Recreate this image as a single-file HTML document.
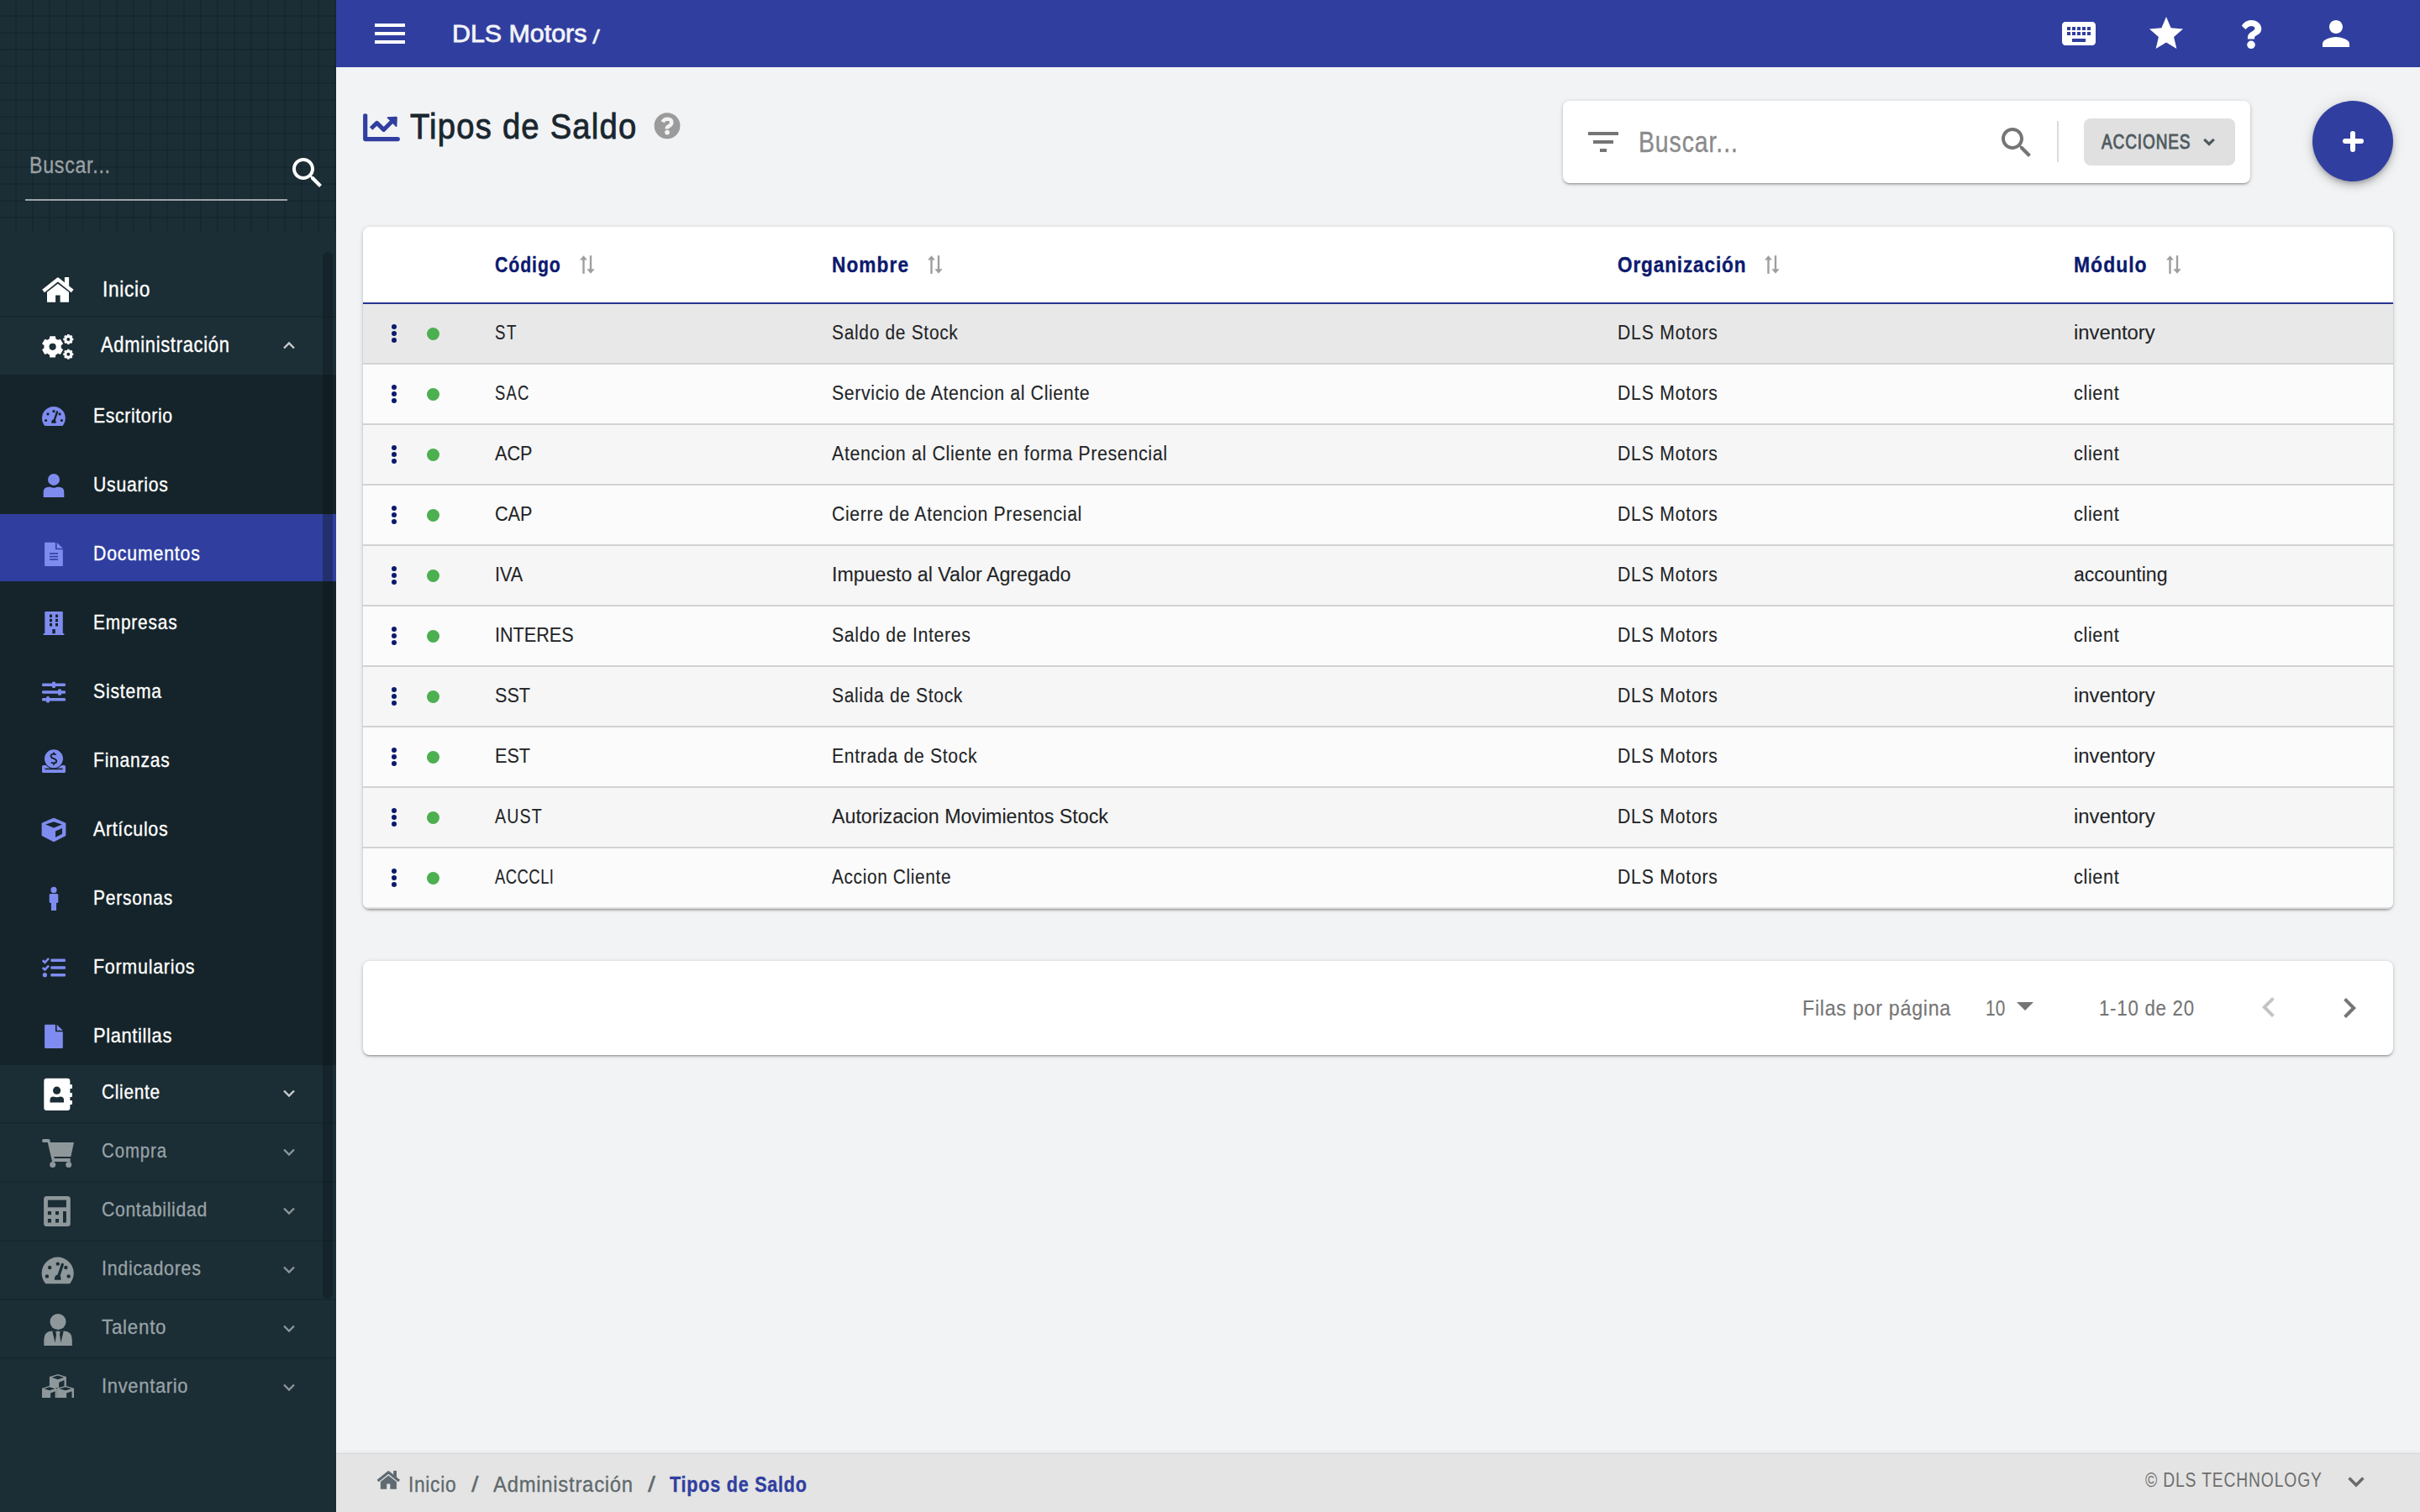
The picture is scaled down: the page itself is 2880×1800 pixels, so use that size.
<!DOCTYPE html>
<html><head><meta charset="utf-8"><title>Tipos de Saldo</title>
<style>
html,body{margin:0;padding:0;width:2880px;height:1800px;overflow:hidden;background:#f2f3f5;}
body{position:relative;font-family:"Liberation Sans", sans-serif;}
.t{position:absolute;line-height:1;white-space:nowrap;-webkit-text-stroke-width:0.35px;}
.r{position:absolute;display:block;}
#root{position:absolute;left:0;top:0;width:2880px;height:1800px;overflow:hidden;transform-origin:0 0;}
</style></head><body>
<div id="root">
<div class="r" style="left:0px;top:0px;width:400px;height:1800px;background:#1b2d35;"></div>
<div class="r" style="left:0px;top:0px;width:400px;height:276px;background:#1b2d35;background-image:repeating-linear-gradient(90deg, transparent 0px, transparent 18px, rgba(8,20,26,0.19) 18px, rgba(8,20,26,0.19) 20px),repeating-linear-gradient(180deg, transparent 0px, transparent 18px, rgba(8,20,26,0.19) 18px, rgba(8,20,26,0.19) 20px);"></div>
<div class="t" style="left:35.00px;top:184.14px;font-size:27px;color:#9aa1a4;transform:scaleX(0.8594);transform-origin:0 0;letter-spacing:0.838px;">Buscar...</div>
<div class="r" style="left:30px;top:237px;width:312px;height:2px;background:#9ea5a8;"></div>
<svg class="r" style="left:342px;top:182px;" width="48" height="48" viewBox="0 0 24 24"><path fill="#fff" d="M15.5 14h-.79l-.28-.27C15.41 12.59 16 11.11 16 9.5 16 5.91 13.09 3 9.5 3S3 5.91 3 9.5 5.91 16 9.5 16c1.61 0 3.09-.59 4.23-1.57l.27.28v.79l5 4.99L20.49 19l-4.99-5zm-6 0C7.01 14 5 11.99 5 9.5S7.01 5 9.5 5 14 7.01 14 9.5 11.99 14 9.5 14z"/></svg>
<div class="r" style="left:0px;top:376px;width:400px;height:2px;background:#172830;"></div>
<div class="r" style="left:0px;top:378px;width:400px;height:68px;background:#1c2e36;"></div>
<div class="r" style="left:0px;top:446px;width:400px;height:822px;background:#15242a;"></div>
<div class="r" style="left:0px;top:612px;width:400px;height:80px;background:#303f9f;"></div>
<div class="r" style="left:0px;top:1336px;width:400px;height:2px;background:#172830;"></div>
<div class="r" style="left:0px;top:1406px;width:400px;height:2px;background:#172830;"></div>
<div class="r" style="left:0px;top:1476px;width:400px;height:2px;background:#172830;"></div>
<div class="r" style="left:0px;top:1546px;width:400px;height:2px;background:#172830;"></div>
<div class="r" style="left:0px;top:1616px;width:400px;height:2px;background:#172830;"></div>
<div class="r" style="left:384px;top:300px;width:12px;height:1246px;background:rgba(10,20,24,0.35);border-radius:6px;"></div>
<div class="t" style="left:121.50px;top:331.94px;font-size:25px;color:#ffffff;transform:scaleX(0.9098);transform-origin:0 0;letter-spacing:0.745px;">Inicio</div>
<div class="t" style="left:120.40px;top:398.14px;font-size:25px;color:#ffffff;transform:scaleX(0.8764);transform-origin:0 0;letter-spacing:0.805px;">Administración</div>
<div class="t" style="left:111.40px;top:482.56px;font-size:24.5px;color:#ffffff;transform:scaleX(0.8661);transform-origin:0 0;letter-spacing:0.724px;">Escritorio</div>
<div class="t" style="left:111.40px;top:564.56px;font-size:24.5px;color:#ffffff;transform:scaleX(0.8648);transform-origin:0 0;letter-spacing:0.881px;">Usuarios</div>
<div class="t" style="left:111.40px;top:646.56px;font-size:24.5px;color:#ffffff;transform:scaleX(0.8669);transform-origin:0 0;letter-spacing:0.975px;">Documentos</div>
<div class="t" style="left:111.40px;top:728.56px;font-size:24.5px;color:#ffffff;transform:scaleX(0.8492);transform-origin:0 0;letter-spacing:1.005px;">Empresas</div>
<div class="t" style="left:111.40px;top:810.56px;font-size:24.5px;color:#ffffff;transform:scaleX(0.8614);transform-origin:0 0;letter-spacing:0.941px;">Sistema</div>
<div class="t" style="left:111.40px;top:892.56px;font-size:24.5px;color:#ffffff;transform:scaleX(0.8589);transform-origin:0 0;letter-spacing:0.906px;">Finanzas</div>
<div class="t" style="left:111.40px;top:974.56px;font-size:24.5px;color:#ffffff;transform:scaleX(0.8744);transform-origin:0 0;letter-spacing:0.760px;">Artículos</div>
<div class="t" style="left:111.40px;top:1056.56px;font-size:24.5px;color:#ffffff;transform:scaleX(0.8546);transform-origin:0 0;letter-spacing:0.944px;">Personas</div>
<div class="t" style="left:111.40px;top:1138.56px;font-size:24.5px;color:#ffffff;transform:scaleX(0.8762);transform-origin:0 0;letter-spacing:0.826px;">Formularios</div>
<div class="t" style="left:111.40px;top:1220.56px;font-size:24.5px;color:#ffffff;transform:scaleX(0.8949);transform-origin:0 0;letter-spacing:0.695px;">Plantillas</div>
<div class="t" style="left:121.00px;top:1287.86px;font-size:24.5px;color:#ffffff;transform:scaleX(0.8506);transform-origin:0 0;letter-spacing:0.811px;">Cliente</div>
<svg class="r" style="left:336px;top:1296px;" width="16" height="12" viewBox="0 0 16 12"><polyline points="2,2.5 8,8.5 14,2.5" fill="none" stroke="#c8cccd" stroke-width="2.4"/></svg>
<div class="t" style="left:121.00px;top:1357.86px;font-size:24.5px;color:#98a2a6;transform:scaleX(0.8318);transform-origin:0 0;letter-spacing:1.112px;">Compra</div>
<svg class="r" style="left:336px;top:1366px;" width="16" height="12" viewBox="0 0 16 12"><polyline points="2,2.5 8,8.5 14,2.5" fill="none" stroke="#8c9598" stroke-width="2.4"/></svg>
<div class="t" style="left:121.00px;top:1427.86px;font-size:24.5px;color:#98a2a6;transform:scaleX(0.8638);transform-origin:0 0;letter-spacing:0.791px;">Contabilidad</div>
<svg class="r" style="left:336px;top:1436px;" width="16" height="12" viewBox="0 0 16 12"><polyline points="2,2.5 8,8.5 14,2.5" fill="none" stroke="#8c9598" stroke-width="2.4"/></svg>
<div class="t" style="left:121.00px;top:1497.86px;font-size:24.5px;color:#98a2a6;transform:scaleX(0.8752);transform-origin:0 0;letter-spacing:0.808px;">Indicadores</div>
<svg class="r" style="left:336px;top:1506px;" width="16" height="12" viewBox="0 0 16 12"><polyline points="2,2.5 8,8.5 14,2.5" fill="none" stroke="#8c9598" stroke-width="2.4"/></svg>
<div class="t" style="left:121.00px;top:1567.86px;font-size:24.5px;color:#98a2a6;transform:scaleX(0.9103);transform-origin:0 0;letter-spacing:0.840px;">Talento</div>
<svg class="r" style="left:336px;top:1576px;" width="16" height="12" viewBox="0 0 16 12"><polyline points="2,2.5 8,8.5 14,2.5" fill="none" stroke="#8c9598" stroke-width="2.4"/></svg>
<div class="t" style="left:121.00px;top:1637.86px;font-size:24.5px;color:#98a2a6;transform:scaleX(0.8961);transform-origin:0 0;letter-spacing:0.763px;">Inventario</div>
<svg class="r" style="left:336px;top:1646px;" width="16" height="12" viewBox="0 0 16 12"><polyline points="2,2.5 8,8.5 14,2.5" fill="none" stroke="#8c9598" stroke-width="2.4"/></svg>
<svg class="r" style="left:336px;top:405px;" width="16" height="12" viewBox="0 0 16 12"><polyline points="2,9.5 8,3.5 14,9.5" fill="none" stroke="#c8cccd" stroke-width="2.4"/></svg>
<svg class="r" style="left:44px;top:322px;" width="50" height="44" viewBox="0 0 50 44"><polyline points="7.6,24.5 24.9,10.6 42.2,24.5" fill="none" stroke="#ffffff" stroke-width="4.4" stroke-linejoin="round"/><rect x="32.9" y="8" width="5.2" height="11" fill="#ffffff"/><polygon points="12,25.8 24.9,15.8 38,25.8 38,37.8 27.6,37.8 27.6,29.4 22.1,29.4 22.1,37.8 12,37.8" fill="#ffffff"/></svg>
<svg class="r" style="left:44px;top:392px;" width="50" height="44" viewBox="0 0 50 44"><polygon points="14.79,11.34 15.34,8.22 21.86,8.22 22.41,11.34 23.06,11.63 23.70,11.97 24.31,12.35 24.89,12.77 27.87,11.68 31.13,17.34 28.70,19.36 28.77,20.08 28.80,20.80 28.77,21.52 28.70,22.24 31.13,24.26 27.87,29.92 24.89,28.83 24.31,29.25 23.70,29.63 23.06,29.97 22.41,30.26 21.86,33.38 15.34,33.38 14.79,30.26 14.14,29.97 13.50,29.63 12.89,29.25 12.31,28.83 9.33,29.92 6.07,24.26 8.50,22.24 8.43,21.52 8.40,20.80 8.43,20.08 8.50,19.36 6.07,17.34 9.33,11.68 12.31,12.77 12.89,12.35 13.50,11.97 14.14,11.63" fill="#ffffff"/><circle cx="18.6" cy="20.8" r="4.1" fill="#1c2e36"/><polygon points="35.20,6.81 35.76,5.28 38.84,5.28 39.40,6.81 39.40,6.82 39.40,6.82 39.41,6.82 39.41,6.82 40.90,6.13 43.07,8.30 42.38,9.79 42.38,9.79 42.38,9.80 42.38,9.80 42.39,9.80 43.92,10.36 43.92,13.44 42.39,14.00 42.38,14.00 42.38,14.00 42.38,14.01 42.38,14.01 43.07,15.50 40.90,17.67 39.41,16.98 39.41,16.98 39.40,16.98 39.40,16.98 39.40,16.99 38.84,18.52 35.76,18.52 35.20,16.99 35.20,16.98 35.20,16.98 35.19,16.98 35.19,16.98 33.70,17.67 31.53,15.50 32.22,14.01 32.22,14.01 32.22,14.00 32.22,14.00 32.21,14.00 30.68,13.44 30.68,10.36 32.21,9.80 32.22,9.80 32.22,9.80 32.22,9.79 32.22,9.79 31.53,8.30 33.70,6.13 35.19,6.82 35.19,6.82 35.20,6.82 35.20,6.82" fill="#ffffff" stroke="#1c2e36" stroke-width="1.2"/><circle cx="37.3" cy="11.9" r="2.0" fill="#1c2e36"/><polygon points="35.20,24.61 35.76,23.08 38.84,23.08 39.40,24.61 39.40,24.62 39.40,24.62 39.41,24.62 39.41,24.62 40.90,23.93 43.07,26.10 42.38,27.59 42.38,27.59 42.38,27.60 42.38,27.60 42.39,27.60 43.92,28.16 43.92,31.24 42.39,31.80 42.38,31.80 42.38,31.80 42.38,31.81 42.38,31.81 43.07,33.30 40.90,35.47 39.41,34.78 39.41,34.78 39.40,34.78 39.40,34.78 39.40,34.79 38.84,36.32 35.76,36.32 35.20,34.79 35.20,34.78 35.20,34.78 35.19,34.78 35.19,34.78 33.70,35.47 31.53,33.30 32.22,31.81 32.22,31.81 32.22,31.80 32.22,31.80 32.21,31.80 30.68,31.24 30.68,28.16 32.21,27.60 32.22,27.60 32.22,27.60 32.22,27.59 32.22,27.59 31.53,26.10 33.70,23.93 35.19,24.62 35.19,24.62 35.20,24.62 35.20,24.62" fill="#ffffff" stroke="#1c2e36" stroke-width="1.2"/><circle cx="37.3" cy="29.7" r="2.0" fill="#1c2e36"/></svg>
<svg class="r" style="left:44px;top:478px;" width="40" height="36" viewBox="0 0 40 36"><path d="M 19.90 0" fill="none"/><path d="M 9.4 28.9 A 13.9 13.9 0 1 1 30.4 28.9 Z" fill="#7f8cef"/><circle cx="13" cy="14.9" r="1.6" fill="#15242a"/><circle cx="20" cy="11.7" r="1.6" fill="#15242a"/><circle cx="27" cy="14.9" r="1.6" fill="#15242a"/><circle cx="10.6" cy="22.5" r="1.6" fill="#15242a"/><circle cx="29.4" cy="22.5" r="1.6" fill="#15242a"/><line x1="24" y1="12.3" x2="20.5" y2="23" stroke="#15242a" stroke-width="2.4" stroke-linecap="round"/><path d="M17.2 25.7 L17.2 24 Q17.5 21.5 20 21.3 Q22.6 21.5 22.7 24 L22.7 25.7 Z" fill="#15242a"/></svg>
<svg class="r" style="left:44px;top:556px;" width="40" height="40" viewBox="0 0 40 40"><circle cx="20" cy="14.9" r="7" fill="#7f8cef"/><path d="M7.7 36 L7.7 30 Q7.7 23.8 14 23.8 L16 23.8 Q20 25.6 24 23.8 L26 23.8 Q32.3 23.8 32.3 30 L32.3 36 Z" fill="#7f8cef"/></svg>
<svg class="r" style="left:44px;top:640px;" width="40" height="40" viewBox="0 0 40 40"><path d="M9.1 6.7 Q9.1 5.7 10.1 5.7 L21.9 5.7 L21.9 13.3 Q21.9 14.3 22.9 14.3 L30.8 14.3 L30.8 33.1 Q30.8 34.1 29.8 34.1 L10.1 34.1 Q9.1 34.1 9.1 33.1 Z" fill="#7f8cef"/><path d="M23.6 5.7 L30.8 12.7 L23.6 12.7 Z" fill="#7f8cef"/><rect x="15" y="18.2" width="10" height="1.6" fill="#303f9f"/><rect x="15" y="21.8" width="10" height="1.6" fill="#303f9f"/><rect x="15" y="25.2" width="10" height="1.6" fill="#303f9f"/></svg>
<svg class="r" style="left:44px;top:722px;" width="40" height="40" viewBox="0 0 40 40"><rect x="9.3" y="6" width="21.5" height="27" rx="0.8" fill="#7f8cef"/><rect x="7.7" y="32" width="24.6" height="2" rx="0.5" fill="#7f8cef"/><rect x="15" y="9.5" width="3" height="3.5" fill="#15242a"/><rect x="15" y="14.8" width="3" height="3.5" fill="#15242a"/><rect x="15" y="20" width="3" height="3.5" fill="#15242a"/><rect x="22" y="9.5" width="3" height="3.5" fill="#15242a"/><rect x="22" y="14.8" width="3" height="3.5" fill="#15242a"/><rect x="22" y="20" width="3" height="3.5" fill="#15242a"/><rect x="18.3" y="27" width="3.5" height="5.2" fill="#15242a"/></svg>
<svg class="r" style="left:44px;top:804px;" width="40" height="40" viewBox="0 0 40 40"><rect x="6" y="9.45" width="28" height="3.5" rx="1.2" fill="#7f8cef"/><rect x="18" y="7.499999999999999" width="4" height="7.4" rx="1.5" fill="#7f8cef"/><rect x="6" y="18.25" width="28" height="3.5" rx="1.2" fill="#7f8cef"/><rect x="25" y="16.3" width="4" height="7.4" rx="1.5" fill="#7f8cef"/><rect x="6" y="26.95" width="28" height="3.5" rx="1.2" fill="#7f8cef"/><rect x="11" y="25.0" width="4" height="7.4" rx="1.5" fill="#7f8cef"/></svg>
<svg class="r" style="left:44px;top:886px;" width="40" height="40" viewBox="0 0 40 40"><rect x="6" y="25.1" width="28" height="8.9" rx="1.5" fill="#7f8cef"/><rect x="9.5" y="28.6" width="21" height="1.6" fill="#15242a"/><circle cx="20" cy="17.3" r="12" fill="#15242a"/><circle cx="20" cy="17.3" r="11" fill="#7f8cef"/><path d="M22.6 12.6 Q21.6 11.6 20 11.6 Q16.4 11.6 16.6 14.2 Q16.8 16.2 20 17.2 Q23.4 18.2 23.2 20.4 Q23 22.4 20 22.4 Q17.8 22.4 16.8 21.8" fill="none" stroke="#15242a" stroke-width="1.9"/><rect x="19.1" y="9.6" width="1.8" height="2.6" fill="#15242a"/><rect x="19.1" y="22.2" width="1.8" height="2.6" fill="#15242a"/></svg>
<svg class="r" style="left:44px;top:968px;" width="40" height="40" viewBox="0 0 40 40"><polygon points="20,6 34,12 34,26.7 20,33.9 6,26.7 6,12" fill="#7f8cef" stroke="#7f8cef" stroke-width="0.8" stroke-linejoin="round"/><polygon points="20,10.3 29.8,13.5 20,17.6 10.1,13.5" fill="#15242a"/><polygon points="22,21.4 30,17.9 30,24.7 22,28.8" fill="#15242a"/></svg>
<svg class="r" style="left:44px;top:1050px;" width="40" height="40" viewBox="0 0 40 40"><circle cx="20" cy="9.4" r="3.6" fill="#7f8cef"/><rect x="14.7" y="14" width="10.6" height="11" rx="1.6" fill="#7f8cef"/><rect x="16.9" y="23" width="6.1" height="11" rx="0.6" fill="#7f8cef"/></svg>
<svg class="r" style="left:44px;top:1132px;" width="40" height="40" viewBox="0 0 40 40"><polyline points="6.8,11.3 9.4,13.8 14,8.9" fill="none" stroke="#7f8cef" stroke-width="2.6"/><polyline points="6.8,20.0 9.4,22.5 14,17.6" fill="none" stroke="#7f8cef" stroke-width="2.6"/><circle cx="9.4" cy="28.7" r="2.6" fill="#7f8cef"/><rect x="16.3" y="9.45" width="17.7" height="3.5" rx="1.2" fill="#7f8cef"/><rect x="16.3" y="18.25" width="17.7" height="3.5" rx="1.2" fill="#7f8cef"/><rect x="16.3" y="26.95" width="17.7" height="3.5" rx="1.2" fill="#7f8cef"/></svg>
<svg class="r" style="left:44px;top:1214px;" width="40" height="40" viewBox="0 0 40 40"><path d="M9.1 6.7 Q9.1 5.7 10.1 5.7 L21.9 5.7 L21.9 13.3 Q21.9 14.3 22.9 14.3 L30.8 14.3 L30.8 33.1 Q30.8 34.1 29.8 34.1 L10.1 34.1 Q9.1 34.1 9.1 33.1 Z" fill="#7f8cef"/><path d="M23.6 5.7 L30.8 12.7 L23.6 12.7 Z" fill="#7f8cef"/></svg>
<svg class="r" style="left:44px;top:1278px;" width="50" height="50" viewBox="0 0 50 50"><rect x="8.3" y="5.8" width="31.1" height="38.2" rx="3.2" fill="#ffffff"/><rect x="38" y="12.9" width="4" height="5.1" rx="1" fill="#ffffff"/><rect x="38" y="23.1" width="4" height="4.799999999999997" rx="1" fill="#ffffff"/><rect x="38" y="31.9" width="4" height="5.100000000000001" rx="1" fill="#ffffff"/><circle cx="23.6" cy="20.2" r="4.6" fill="#1b2d35"/><path d="M15.5 34.4 L15.5 31.4 Q15.5 27.4 19.5 27.4 Q23.6 29 27.8 27.4 Q32 27.4 32 31.4 L32 34.4 Z" fill="#1b2d35"/></svg>
<svg class="r" style="left:44px;top:1348px;" width="50" height="50" viewBox="0 0 50 50"><rect x="6" y="7.9" width="9.6" height="4" rx="2" fill="#8e989b"/><polygon points="12.4,10.5 15.4,10.5 16.2,12 44,12 40.3,29.1 20.2,29.1 20.9,31.1 39.7,31.1 39.7,35 18.1,35" fill="#8e989b"/><circle cx="18.7" cy="38.4" r="3.5" fill="#8e989b"/><circle cx="37.7" cy="38.4" r="3.5" fill="#8e989b"/></svg>
<svg class="r" style="left:44px;top:1418px;" width="50" height="50" viewBox="0 0 50 50"><rect x="8.1" y="6" width="31.7" height="36" rx="3.5" fill="#8e989b"/><rect x="12.9" y="10.6" width="22" height="8.7" fill="#1b2d35"/><rect x="12.9" y="24" width="4.1" height="4.199999999999999" fill="#1b2d35"/><rect x="22" y="24" width="4" height="4.199999999999999" fill="#1b2d35"/><rect x="31" y="24" width="3.8999999999999986" height="13.5" fill="#1b2d35"/><rect x="12.9" y="33" width="4.1" height="4.5" fill="#1b2d35"/><rect x="22" y="33" width="4" height="4.5" fill="#1b2d35"/></svg>
<svg class="r" style="left:44px;top:1488px;" width="50" height="50" viewBox="0 0 50 50"><g transform="translate(-2.6,0.55) scale(1.37)"><path d="M 19.90 0" fill="none"/><path d="M 9.4 28.9 A 13.9 13.9 0 1 1 30.4 28.9 Z" fill="#8e989b"/><circle cx="13" cy="14.9" r="1.6" fill="#1b2d35"/><circle cx="20" cy="11.7" r="1.6" fill="#1b2d35"/><circle cx="27" cy="14.9" r="1.6" fill="#1b2d35"/><circle cx="10.6" cy="22.5" r="1.6" fill="#1b2d35"/><circle cx="29.4" cy="22.5" r="1.6" fill="#1b2d35"/><line x1="24" y1="12.3" x2="20.5" y2="23" stroke="#1b2d35" stroke-width="2.4" stroke-linecap="round"/><path d="M17.2 25.7 L17.2 24 Q17.5 21.5 20 21.3 Q22.6 21.5 22.7 24 L22.7 25.7 Z" fill="#1b2d35"/></g></svg>
<svg class="r" style="left:44px;top:1558px;" width="50" height="50" viewBox="0 0 50 50"><circle cx="25" cy="15.5" r="9.5" fill="#8e989b"/><path d="M8.3 44 L8.3 37 Q8.3 26.5 18 26.5 L32 26.5 Q41.8 26.5 41.8 37 L41.8 44 Z" fill="#8e989b"/><polygon points="18.2,26.2 23.6,26.2 21.6,40.6" fill="#1b2d35"/><polygon points="26.4,26.2 31.8,26.2 28.4,40.6" fill="#1b2d35"/><polygon points="22,27.5 28,27.5 26.2,31.8 25,31.8 23.8,31.8" fill="#8e989b"/></svg>
<svg class="r" style="left:44px;top:1628px;" width="50" height="50" viewBox="0 0 50 50"><polygon points="24.9,7.9 34.9,11.100000000000001 34.9,23.9 14.9,23.9 14.9,11.100000000000001" fill="#8e989b"/><polygon points="24.9,9.5 32.1,11.676 24.9,14.14 17.7,11.676" fill="#1b2d35"/><polygon points="26.099999999999998,17.82 32.5,15.100000000000001 32.5,23.9 26.099999999999998,23.9" fill="#1b2d35"/><polygon points="14.9,21.8 23.8,24.64 23.8,36.0 6,36.0 6,24.64" fill="#8e989b"/><polygon points="14.9,23.22 21.308,25.1512 14.9,27.338 8.492,25.1512" fill="#1b2d35"/><polygon points="16.1,30.604 21.664,28.19 21.664,36.0 16.1,36.0" fill="#1b2d35"/><polygon points="33.9,21.8 44.0,24.64 44.0,36.0 23.8,36.0 23.8,24.64" fill="#8e989b"/><polygon points="33.9,23.22 41.172,25.1512 33.9,27.338 26.628,25.1512" fill="#1b2d35"/><polygon points="35.1,30.604 41.576,28.19 41.576,36.0 35.1,36.0" fill="#1b2d35"/></svg>
<div class="r" style="left:400px;top:0px;width:2480px;height:80px;background:#303f9f;"></div>
<div class="r" style="left:446px;top:28px;width:36px;height:4px;background:#ffffff;"></div>
<div class="r" style="left:446px;top:38px;width:36px;height:4px;background:#ffffff;"></div>
<div class="r" style="left:446px;top:48px;width:36px;height:4px;background:#ffffff;"></div>
<div class="t" style="left:538.00px;top:24.61px;font-size:30px;color:#f3f3f7;transform:scaleX(1.0128);transform-origin:0 0;-webkit-text-stroke-width:0.8px;">DLS Motors</div>
<div class="t" style="left:705.00px;top:31.68px;font-size:24px;color:#f3f3f7;transform:scaleX(1.3333);transform-origin:0 0;">/</div>
<svg class="r" style="left:2450px;top:16px;" width="48" height="48" viewBox="0 0 24 24"><path fill="#fff" d="M20 5H4c-1.1 0-1.99.9-1.99 2L2 17c0 1.1.9 2 2 2h16c1.1 0 2-.9 2-2V7c0-1.1-.9-2-2-2zm-9 3h2v2h-2V8zm0 3h2v2h-2v-2zM8 8h2v2H8V8zm0 3h2v2H8v-2zm-1 2H5v-2h2v2zm0-3H5V8h2v2zm9 7H8v-2h8v2zm0-4h-2v-2h2v2zm0-3h-2V8h2v2zm3 3h-2v-2h2v2zm0-3h-2V8h2v2z"/></svg>
<svg class="r" style="left:2554px;top:16px;" width="48" height="48" viewBox="0 0 24 24"><path fill="#fff" d="M12 17.27L18.18 21l-1.64-7.03L22 9.24l-7.19-.61L12 2 9.19 8.63 2 9.24l5.46 4.73L5.82 21z"/></svg>
<svg class="r" style="left:2656px;top:18px;" width="48" height="46" viewBox="0 0 48 46"><path fill="#fff" d="M11.9 12.8 C14 8.5 18.5 5.9 23.4 5.9 C30 5.9 35.3 10.5 35.3 16.1 C35.3 19.5 33.8 21.5 31.5 22.9 L28.5 24.7 C27.4 25.4 27.1 26.2 27.1 27 L27.1 28.6 L18.9 28.6 L18.9 26.6 C18.9 23.4 20.6 21.5 23.2 20 L25.6 18.5 C26.8 17.7 27.4 16.9 27.4 15.6 C27.4 14 25.5 13.1 23.3 13.1 C21 13.1 19.7 14.1 18.3 15.3 L16.4 16.9 Z"/><circle cx="23" cy="35.3" r="4.8" fill="#fff"/></svg>
<svg class="r" style="left:2756px;top:16px;" width="48" height="48" viewBox="0 0 24 24"><path fill="#fff" d="M12 12c2.21 0 4-1.79 4-4s-1.79-4-4-4-4 1.79-4 4 1.79 4 4 4zm0 2c-2.67 0-8 1.34-8 4v2h16v-2c0-2.66-5.33-4-8-4z"/></svg>
<svg class="r" style="left:426px;top:128px;" width="60" height="46" viewBox="0 0 60 46"><path d="M6.1 9.6 Q6.1 7.3 8.7 7.3 Q11.3 7.3 11.3 9.6 L11.3 35.1 L47.4 35.1 Q49.9 35.1 49.9 37.6 Q49.9 40.2 47.4 40.2 L9 40.2 Q6.1 40.2 6.1 37.2 Z" fill="#303f9f"/><polyline points="15.6,25 22.5,18.4 30.6,26.4 40.5,16.5" fill="none" stroke="#303f9f" stroke-width="5" stroke-linejoin="round"/><path d="M35.2 11.2 L45.4 10.8 Q46.8 10.8 46.8 12.2 L46.4 22.4 Q46 23.4 45 22.8 L34.8 12.4 Q34.4 11.4 35.2 11.2 Z" fill="#303f9f"/></svg>
<div class="t" style="left:487.50px;top:130.02px;font-size:42.5px;color:#19272f;transform:scaleX(0.8973);transform-origin:0 0;letter-spacing:1.385px;-webkit-text-stroke-width:0.9px;">Tipos de Saldo</div>
<svg class="r" style="left:770px;top:128px;" width="46" height="46" viewBox="0 0 46 46"><circle cx="24" cy="21.75" r="15.4" fill="#9b9b9b"/><path d="M18.6 17.2 Q20.3 13.6 24.4 13.6 Q29.3 13.8 29.3 17.8 Q29.3 20.2 26.6 21.8 Q23.6 23.4 23.6 25.6" fill="none" stroke="#f2f3f5" stroke-width="4.4"/><circle cx="24" cy="29.6" r="2.9" fill="#f2f3f5"/></svg>
<div class="r" style="left:1860px;top:120px;width:818px;height:98px;background:#ffffff;border-radius:8px;box-shadow:0 1px 5px rgba(0,0,0,0.2),0 2px 2px rgba(0,0,0,0.14),0 3px 1px -2px rgba(0,0,0,0.12);"></div>
<svg class="r" style="left:1884px;top:145px;" width="48" height="48" viewBox="0 0 24 24"><path fill="#757575" d="M10 18h4v-2h-4v2zM3 6v2h18V6H3zm3 7h12v-2H6v2z"/></svg>
<div class="t" style="left:1950.00px;top:150.77px;font-size:35px;color:#8a8a8a;transform:scaleX(0.8135);transform-origin:0 0;letter-spacing:1.086px;">Buscar...</div>
<svg class="r" style="left:2376px;top:146px;" width="48" height="48" viewBox="0 0 24 24"><path fill="#757575" d="M15.5 14h-.79l-.28-.27C15.41 12.59 16 11.11 16 9.5 16 5.91 13.09 3 9.5 3S3 5.91 3 9.5 5.91 16 9.5 16c1.61 0 3.09-.59 4.23-1.57l.27.28v.79l5 4.99L20.49 19l-4.99-5zm-6 0C7.01 14 5 11.99 5 9.5S7.01 5 9.5 5 14 7.01 14 9.5 11.99 14 9.5 14z"/></svg>
<div class="r" style="left:2448px;top:144px;width:2px;height:49px;background:#dcdcdc;"></div>
<div class="r" style="left:2480px;top:141px;width:180px;height:56px;background:#e0e0e0;border-radius:8px;"></div>
<div class="t" style="left:2500.50px;top:157.93px;font-size:23px;color:#4f5b5f;transform:scaleX(0.8256);transform-origin:0 0;letter-spacing:1.095px;-webkit-text-stroke-width:0.9px;">ACCIONES</div>
<svg class="r" style="left:2612px;top:150px;" width="36" height="36" viewBox="2612 150 36 36"><polyline points="2623.2,165.8 2629,171.5 2634.8,165.8" fill="none" stroke="#4f5b5f" stroke-width="3.2"/></svg>
<div class="r" style="left:2752px;top:120px;width:96px;height:96px;background:#303f9f;border-radius:50%;box-shadow:0 3px 5px -1px rgba(0,0,0,0.2),0 6px 10px rgba(0,0,0,0.14),0 1px 18px rgba(0,0,0,0.12);"></div>
<div class="r" style="left:2787.5px;top:165px;width:25px;height:6px;background:#ffffff;border-radius:3px;"></div>
<div class="r" style="left:2797px;top:155.5px;width:6px;height:25px;background:#ffffff;border-radius:3px;"></div>
<div class="r" style="left:432px;top:270px;width:2416px;height:812px;background:#fff;border-radius:8px;overflow:hidden;box-shadow:0 1px 5px rgba(0,0,0,0.2),0 2px 2px rgba(0,0,0,0.14),0 3px 1px -2px rgba(0,0,0,0.12);">
<div class="r" style="left:0px;top:90px;width:2416px;height:2px;background:#283593;"></div>
<div class="r" style="left:0px;top:92px;width:2416px;height:70px;background:#e8e8e8;"></div>
<div class="r" style="left:0px;top:162px;width:2416px;height:2px;background:#d2d2d2;"></div>
<div class="r" style="left:34px;top:116.39999999999998px;width:6px;height:6px;background:#0c1a6e;border-radius:50%;"></div>
<div class="r" style="left:34px;top:124.0px;width:6px;height:6px;background:#0c1a6e;border-radius:50%;"></div>
<div class="r" style="left:34px;top:131.60000000000002px;width:6px;height:6px;background:#0c1a6e;border-radius:50%;"></div>
<div class="r" style="left:75.5px;top:119.5px;width:15px;height:15px;background:#4caf50;border-radius:50%;"></div>
<div class="t" style="left:157.00px;top:114.93px;font-size:23px;color:#222426;transform:scaleX(0.8128);transform-origin:0 0;letter-spacing:1.875px;-webkit-text-stroke-width:0.1px;">ST</div>
<div class="t" style="left:558.00px;top:114.93px;font-size:23px;color:#222426;transform:scaleX(0.9104);transform-origin:0 0;letter-spacing:0.760px;-webkit-text-stroke-width:0.1px;">Saldo de Stock</div>
<div class="t" style="left:1492.50px;top:114.93px;font-size:23px;color:#222426;transform:scaleX(0.9208);transform-origin:0 0;letter-spacing:0.861px;-webkit-text-stroke-width:0.1px;">DLS Motors</div>
<div class="t" style="left:2036.00px;top:114.93px;font-size:23px;color:#222426;transform:scaleX(1.0356);transform-origin:0 0;-webkit-text-stroke-width:0.1px;">inventory</div>
<div class="r" style="left:0px;top:164px;width:2416px;height:70px;background:#fbfbfb;"></div>
<div class="r" style="left:0px;top:234px;width:2416px;height:2px;background:#d2d2d2;"></div>
<div class="r" style="left:34px;top:188.39999999999998px;width:6px;height:6px;background:#0c1a6e;border-radius:50%;"></div>
<div class="r" style="left:34px;top:196.0px;width:6px;height:6px;background:#0c1a6e;border-radius:50%;"></div>
<div class="r" style="left:34px;top:203.60000000000002px;width:6px;height:6px;background:#0c1a6e;border-radius:50%;"></div>
<div class="r" style="left:75.5px;top:191.5px;width:15px;height:15px;background:#4caf50;border-radius:50%;"></div>
<div class="t" style="left:157.00px;top:186.93px;font-size:23px;color:#222426;transform:scaleX(0.8000);transform-origin:0 0;letter-spacing:1.500px;-webkit-text-stroke-width:0.1px;">SAC</div>
<div class="t" style="left:558.00px;top:186.93px;font-size:23px;color:#222426;transform:scaleX(0.9281);transform-origin:0 0;letter-spacing:0.661px;-webkit-text-stroke-width:0.1px;">Servicio de Atencion al Cliente</div>
<div class="t" style="left:1492.50px;top:186.93px;font-size:23px;color:#222426;transform:scaleX(0.9208);transform-origin:0 0;letter-spacing:0.861px;-webkit-text-stroke-width:0.1px;">DLS Motors</div>
<div class="t" style="left:2036.00px;top:186.93px;font-size:23px;color:#222426;transform:scaleX(0.9391);transform-origin:0 0;letter-spacing:0.686px;-webkit-text-stroke-width:0.1px;">client</div>
<div class="r" style="left:0px;top:236px;width:2416px;height:70px;background:#f6f6f6;"></div>
<div class="r" style="left:0px;top:306px;width:2416px;height:2px;background:#d2d2d2;"></div>
<div class="r" style="left:34px;top:260.4px;width:6px;height:6px;background:#0c1a6e;border-radius:50%;"></div>
<div class="r" style="left:34px;top:268.0px;width:6px;height:6px;background:#0c1a6e;border-radius:50%;"></div>
<div class="r" style="left:34px;top:275.6px;width:6px;height:6px;background:#0c1a6e;border-radius:50%;"></div>
<div class="r" style="left:75.5px;top:263.5px;width:15px;height:15px;background:#4caf50;border-radius:50%;"></div>
<div class="t" style="left:157.00px;top:258.93px;font-size:23px;color:#222426;transform:scaleX(0.9400);transform-origin:0 0;-webkit-text-stroke-width:0.1px;">ACP</div>
<div class="t" style="left:558.00px;top:258.93px;font-size:23px;color:#222426;transform:scaleX(0.9312);transform-origin:0 0;letter-spacing:0.677px;-webkit-text-stroke-width:0.1px;">Atencion al Cliente en forma Presencial</div>
<div class="t" style="left:1492.50px;top:258.93px;font-size:23px;color:#222426;transform:scaleX(0.9208);transform-origin:0 0;letter-spacing:0.861px;-webkit-text-stroke-width:0.1px;">DLS Motors</div>
<div class="t" style="left:2036.00px;top:258.93px;font-size:23px;color:#222426;transform:scaleX(0.9391);transform-origin:0 0;letter-spacing:0.686px;-webkit-text-stroke-width:0.1px;">client</div>
<div class="r" style="left:0px;top:308px;width:2416px;height:70px;background:#fbfbfb;"></div>
<div class="r" style="left:0px;top:378px;width:2416px;height:2px;background:#d2d2d2;"></div>
<div class="r" style="left:34px;top:332.4px;width:6px;height:6px;background:#0c1a6e;border-radius:50%;"></div>
<div class="r" style="left:34px;top:340.0px;width:6px;height:6px;background:#0c1a6e;border-radius:50%;"></div>
<div class="r" style="left:34px;top:347.6px;width:6px;height:6px;background:#0c1a6e;border-radius:50%;"></div>
<div class="r" style="left:75.5px;top:335.5px;width:15px;height:15px;background:#4caf50;border-radius:50%;"></div>
<div class="t" style="left:157.00px;top:330.93px;font-size:23px;color:#222426;transform:scaleX(0.9400);transform-origin:0 0;-webkit-text-stroke-width:0.1px;">CAP</div>
<div class="t" style="left:558.00px;top:330.93px;font-size:23px;color:#222426;transform:scaleX(0.9223);transform-origin:0 0;letter-spacing:0.691px;-webkit-text-stroke-width:0.1px;">Cierre de Atencion Presencial</div>
<div class="t" style="left:1492.50px;top:330.93px;font-size:23px;color:#222426;transform:scaleX(0.9208);transform-origin:0 0;letter-spacing:0.861px;-webkit-text-stroke-width:0.1px;">DLS Motors</div>
<div class="t" style="left:2036.00px;top:330.93px;font-size:23px;color:#222426;transform:scaleX(0.9391);transform-origin:0 0;letter-spacing:0.686px;-webkit-text-stroke-width:0.1px;">client</div>
<div class="r" style="left:0px;top:380px;width:2416px;height:70px;background:#f6f6f6;"></div>
<div class="r" style="left:0px;top:450px;width:2416px;height:2px;background:#d2d2d2;"></div>
<div class="r" style="left:34px;top:404.4px;width:6px;height:6px;background:#0c1a6e;border-radius:50%;"></div>
<div class="r" style="left:34px;top:412.0px;width:6px;height:6px;background:#0c1a6e;border-radius:50%;"></div>
<div class="r" style="left:34px;top:419.6px;width:6px;height:6px;background:#0c1a6e;border-radius:50%;"></div>
<div class="r" style="left:75.5px;top:407.5px;width:15px;height:15px;background:#4caf50;border-radius:50%;"></div>
<div class="t" style="left:157.00px;top:402.93px;font-size:23px;color:#222426;transform:scaleX(0.9400);transform-origin:0 0;-webkit-text-stroke-width:0.1px;">IVA</div>
<div class="t" style="left:558.00px;top:402.93px;font-size:23px;color:#222426;transform:scaleX(1.0084);transform-origin:0 0;-webkit-text-stroke-width:0.1px;">Impuesto al Valor Agregado</div>
<div class="t" style="left:1492.50px;top:402.93px;font-size:23px;color:#222426;transform:scaleX(0.9208);transform-origin:0 0;letter-spacing:0.861px;-webkit-text-stroke-width:0.1px;">DLS Motors</div>
<div class="t" style="left:2036.00px;top:402.93px;font-size:23px;color:#222426;transform:scaleX(1.0022);transform-origin:0 0;-webkit-text-stroke-width:0.1px;">accounting</div>
<div class="r" style="left:0px;top:452px;width:2416px;height:70px;background:#fbfbfb;"></div>
<div class="r" style="left:0px;top:522px;width:2416px;height:2px;background:#d2d2d2;"></div>
<div class="r" style="left:34px;top:476.4px;width:6px;height:6px;background:#0c1a6e;border-radius:50%;"></div>
<div class="r" style="left:34px;top:484.0px;width:6px;height:6px;background:#0c1a6e;border-radius:50%;"></div>
<div class="r" style="left:34px;top:491.6px;width:6px;height:6px;background:#0c1a6e;border-radius:50%;"></div>
<div class="r" style="left:75.5px;top:479.5px;width:15px;height:15px;background:#4caf50;border-radius:50%;"></div>
<div class="t" style="left:157.00px;top:474.93px;font-size:23px;color:#222426;transform:scaleX(0.9400);transform-origin:0 0;-webkit-text-stroke-width:0.1px;">INTERES</div>
<div class="t" style="left:558.00px;top:474.93px;font-size:23px;color:#222426;transform:scaleX(0.9260);transform-origin:0 0;letter-spacing:0.713px;-webkit-text-stroke-width:0.1px;">Saldo de Interes</div>
<div class="t" style="left:1492.50px;top:474.93px;font-size:23px;color:#222426;transform:scaleX(0.9208);transform-origin:0 0;letter-spacing:0.861px;-webkit-text-stroke-width:0.1px;">DLS Motors</div>
<div class="t" style="left:2036.00px;top:474.93px;font-size:23px;color:#222426;transform:scaleX(0.9391);transform-origin:0 0;letter-spacing:0.686px;-webkit-text-stroke-width:0.1px;">client</div>
<div class="r" style="left:0px;top:524px;width:2416px;height:70px;background:#f6f6f6;"></div>
<div class="r" style="left:0px;top:594px;width:2416px;height:2px;background:#d2d2d2;"></div>
<div class="r" style="left:34px;top:548.4px;width:6px;height:6px;background:#0c1a6e;border-radius:50%;"></div>
<div class="r" style="left:34px;top:556.0px;width:6px;height:6px;background:#0c1a6e;border-radius:50%;"></div>
<div class="r" style="left:34px;top:563.6px;width:6px;height:6px;background:#0c1a6e;border-radius:50%;"></div>
<div class="r" style="left:75.5px;top:551.5px;width:15px;height:15px;background:#4caf50;border-radius:50%;"></div>
<div class="t" style="left:157.00px;top:546.93px;font-size:23px;color:#222426;transform:scaleX(0.9400);transform-origin:0 0;-webkit-text-stroke-width:0.1px;">SST</div>
<div class="t" style="left:558.00px;top:546.93px;font-size:23px;color:#222426;transform:scaleX(0.9136);transform-origin:0 0;letter-spacing:0.729px;-webkit-text-stroke-width:0.1px;">Salida de Stock</div>
<div class="t" style="left:1492.50px;top:546.93px;font-size:23px;color:#222426;transform:scaleX(0.9208);transform-origin:0 0;letter-spacing:0.861px;-webkit-text-stroke-width:0.1px;">DLS Motors</div>
<div class="t" style="left:2036.00px;top:546.93px;font-size:23px;color:#222426;transform:scaleX(1.0356);transform-origin:0 0;-webkit-text-stroke-width:0.1px;">inventory</div>
<div class="r" style="left:0px;top:596px;width:2416px;height:70px;background:#fbfbfb;"></div>
<div class="r" style="left:0px;top:666px;width:2416px;height:2px;background:#d2d2d2;"></div>
<div class="r" style="left:34px;top:620.4px;width:6px;height:6px;background:#0c1a6e;border-radius:50%;"></div>
<div class="r" style="left:34px;top:628.0px;width:6px;height:6px;background:#0c1a6e;border-radius:50%;"></div>
<div class="r" style="left:34px;top:635.6px;width:6px;height:6px;background:#0c1a6e;border-radius:50%;"></div>
<div class="r" style="left:75.5px;top:623.5px;width:15px;height:15px;background:#4caf50;border-radius:50%;"></div>
<div class="t" style="left:157.00px;top:618.93px;font-size:23px;color:#222426;transform:scaleX(0.9400);transform-origin:0 0;-webkit-text-stroke-width:0.1px;">EST</div>
<div class="t" style="left:558.00px;top:618.93px;font-size:23px;color:#222426;transform:scaleX(0.9191);transform-origin:0 0;letter-spacing:0.752px;-webkit-text-stroke-width:0.1px;">Entrada de Stock</div>
<div class="t" style="left:1492.50px;top:618.93px;font-size:23px;color:#222426;transform:scaleX(0.9208);transform-origin:0 0;letter-spacing:0.861px;-webkit-text-stroke-width:0.1px;">DLS Motors</div>
<div class="t" style="left:2036.00px;top:618.93px;font-size:23px;color:#222426;transform:scaleX(1.0356);transform-origin:0 0;-webkit-text-stroke-width:0.1px;">inventory</div>
<div class="r" style="left:0px;top:668px;width:2416px;height:70px;background:#f6f6f6;"></div>
<div class="r" style="left:0px;top:738px;width:2416px;height:2px;background:#d2d2d2;"></div>
<div class="r" style="left:34px;top:692.4px;width:6px;height:6px;background:#0c1a6e;border-radius:50%;"></div>
<div class="r" style="left:34px;top:700.0px;width:6px;height:6px;background:#0c1a6e;border-radius:50%;"></div>
<div class="r" style="left:34px;top:707.6px;width:6px;height:6px;background:#0c1a6e;border-radius:50%;"></div>
<div class="r" style="left:75.5px;top:695.5px;width:15px;height:15px;background:#4caf50;border-radius:50%;"></div>
<div class="t" style="left:157.00px;top:690.93px;font-size:23px;color:#222426;transform:scaleX(0.8531);transform-origin:0 0;letter-spacing:1.306px;-webkit-text-stroke-width:0.1px;">AUST</div>
<div class="t" style="left:558.00px;top:690.93px;font-size:23px;color:#222426;transform:scaleX(1.0088);transform-origin:0 0;-webkit-text-stroke-width:0.1px;">Autorizacion Movimientos Stock</div>
<div class="t" style="left:1492.50px;top:690.93px;font-size:23px;color:#222426;transform:scaleX(0.9208);transform-origin:0 0;letter-spacing:0.861px;-webkit-text-stroke-width:0.1px;">DLS Motors</div>
<div class="t" style="left:2036.00px;top:690.93px;font-size:23px;color:#222426;transform:scaleX(1.0356);transform-origin:0 0;-webkit-text-stroke-width:0.1px;">inventory</div>
<div class="r" style="left:0px;top:740px;width:2416px;height:70px;background:#fbfbfb;"></div>
<div class="r" style="left:0px;top:810px;width:2416px;height:2px;background:#dedede;"></div>
<div class="r" style="left:34px;top:764.4000000000001px;width:6px;height:6px;background:#0c1a6e;border-radius:50%;"></div>
<div class="r" style="left:34px;top:772.0px;width:6px;height:6px;background:#0c1a6e;border-radius:50%;"></div>
<div class="r" style="left:34px;top:779.5999999999999px;width:6px;height:6px;background:#0c1a6e;border-radius:50%;"></div>
<div class="r" style="left:75.5px;top:767.5px;width:15px;height:15px;background:#4caf50;border-radius:50%;"></div>
<div class="t" style="left:157.00px;top:762.93px;font-size:23px;color:#222426;transform:scaleX(0.8000);transform-origin:0 0;letter-spacing:0.625px;-webkit-text-stroke-width:0.1px;">ACCCLI</div>
<div class="t" style="left:558.00px;top:762.93px;font-size:23px;color:#222426;transform:scaleX(0.9048);transform-origin:0 0;letter-spacing:0.722px;-webkit-text-stroke-width:0.1px;">Accion Cliente</div>
<div class="t" style="left:1492.50px;top:762.93px;font-size:23px;color:#222426;transform:scaleX(0.9208);transform-origin:0 0;letter-spacing:0.861px;-webkit-text-stroke-width:0.1px;">DLS Motors</div>
<div class="t" style="left:2036.00px;top:762.93px;font-size:23px;color:#222426;transform:scaleX(0.9391);transform-origin:0 0;letter-spacing:0.686px;-webkit-text-stroke-width:0.1px;">client</div>
<div class="t" style="left:157.00px;top:32.94px;font-size:25px;color:#0c1a6e;font-weight:700;transform:scaleX(0.8491);transform-origin:0 0;letter-spacing:1.099px;">Código</div>
<svg class="r" style="left:258px;top:34px;" width="18" height="22" viewBox="0 0 18 22"><g fill="#9e9e9e"><rect x="3.3" y="3" width="2.4" height="18.9"/><polygon points="0,5.6 4.5,0.2 9,5.6"/><rect x="11.8" y="0.2" width="2.4" height="18.6"/><polygon points="8.4,16.3 13,21.8 17.6,16.3"/></g></svg>
<div class="t" style="left:558.00px;top:32.94px;font-size:25px;color:#0c1a6e;font-weight:700;transform:scaleX(0.9052);transform-origin:0 0;letter-spacing:1.206px;">Nombre</div>
<svg class="r" style="left:672.3px;top:34px;" width="18" height="22" viewBox="0 0 18 22"><g fill="#9e9e9e"><rect x="3.3" y="3" width="2.4" height="18.9"/><polygon points="0,5.6 4.5,0.2 9,5.6"/><rect x="11.8" y="0.2" width="2.4" height="18.6"/><polygon points="8.4,16.3 13,21.8 17.6,16.3"/></g></svg>
<div class="t" style="left:1492.50px;top:32.94px;font-size:25px;color:#0c1a6e;font-weight:700;transform:scaleX(0.9051);transform-origin:0 0;letter-spacing:0.919px;">Organización</div>
<svg class="r" style="left:1668px;top:34px;" width="18" height="22" viewBox="0 0 18 22"><g fill="#9e9e9e"><rect x="3.3" y="3" width="2.4" height="18.9"/><polygon points="0,5.6 4.5,0.2 9,5.6"/><rect x="11.8" y="0.2" width="2.4" height="18.6"/><polygon points="8.4,16.3 13,21.8 17.6,16.3"/></g></svg>
<div class="t" style="left:2036.00px;top:32.94px;font-size:25px;color:#0c1a6e;font-weight:700;transform:scaleX(0.9159);transform-origin:0 0;letter-spacing:1.135px;">Módulo</div>
<svg class="r" style="left:2146px;top:34px;" width="18" height="22" viewBox="0 0 18 22"><g fill="#9e9e9e"><rect x="3.3" y="3" width="2.4" height="18.9"/><polygon points="0,5.6 4.5,0.2 9,5.6"/><rect x="11.8" y="0.2" width="2.4" height="18.6"/><polygon points="8.4,16.3 13,21.8 17.6,16.3"/></g></svg>
</div>
<div class="r" style="left:432px;top:1144px;width:2416px;height:112px;background:#ffffff;border-radius:8px;box-shadow:0 1px 5px rgba(0,0,0,0.2),0 2px 2px rgba(0,0,0,0.14),0 3px 1px -2px rgba(0,0,0,0.12);"></div>
<div class="t" style="left:2145.00px;top:1186.99px;font-size:26px;color:#757575;transform:scaleX(0.8958);transform-origin:0 0;letter-spacing:0.787px;-webkit-text-stroke-width:0.15px;">Filas por página</div>
<div class="t" style="left:2362.60px;top:1186.99px;font-size:26px;color:#757575;transform:scaleX(0.8000);transform-origin:0 0;letter-spacing:0.125px;-webkit-text-stroke-width:0.15px;">10</div>
<svg class="r" style="left:2400px;top:1193px;" width="20" height="11" viewBox="0 0 20 11"><polygon points="0,0 20,0 10,10" fill="#757575"/></svg>
<div class="t" style="left:2497.50px;top:1186.99px;font-size:26px;color:#757575;transform:scaleX(0.8548);transform-origin:0 0;letter-spacing:0.882px;-webkit-text-stroke-width:0.15px;">1-10 de 20</div>
<svg class="r" style="left:2676px;top:1175px;" width="48" height="48" viewBox="0 0 24 24"><path fill="#c4c4c4" d="M15.41 7.41L14 6l-6 6 6 6 1.41-1.41L10.83 12z"/></svg>
<svg class="r" style="left:2771.8px;top:1175.5px;" width="48" height="48" viewBox="0 0 24 24"><path fill="#757575" d="M10 6L8.59 7.41 13.17 12l-4.58 4.59L10 18l6-6z"/></svg>
<div class="r" style="left:400px;top:1730px;width:2480px;height:70px;background:#e4e4e4;border-top:1px solid #d9d9d9;box-sizing:border-box;box-shadow:0 -1px 4px rgba(0,0,0,0.07);"></div>
<svg class="r" style="left:443.6px;top:1745.1px;" width="36.75" height="32.34" viewBox="0 0 50 44"><polyline points="7.6,24.5 24.9,10.6 42.2,24.5" fill="none" stroke="#5f6b71" stroke-width="4.4" stroke-linejoin="round"/><rect x="32.9" y="8" width="5.2" height="11" fill="#5f6b71"/><polygon points="12,25.8 24.9,15.8 38,25.8 38,37.8 27.6,37.8 27.6,29.4 22.1,29.4 22.1,37.8 12,37.8" fill="#5f6b71"/></svg>
<div class="t" style="left:486.00px;top:1753.79px;font-size:26px;color:#5f6a6d;transform:scaleX(0.8758);transform-origin:0 0;letter-spacing:0.776px;">Inicio</div>
<div class="t" style="left:560.50px;top:1753.79px;font-size:26px;color:#5f6a6d;transform:scaleX(1.1724);transform-origin:0 0;">/</div>
<div class="t" style="left:587.40px;top:1753.79px;font-size:26px;color:#5f6a6d;transform:scaleX(0.9157);transform-origin:0 0;letter-spacing:0.837px;">Administración</div>
<div class="t" style="left:771.00px;top:1753.79px;font-size:26px;color:#5f6a6d;transform:scaleX(1.2414);transform-origin:0 0;">/</div>
<div class="t" style="left:797.00px;top:1753.79px;font-size:26px;color:#303f9f;font-weight:700;transform:scaleX(0.8305);transform-origin:0 0;letter-spacing:0.906px;">Tipos de Saldo</div>
<div class="t" style="left:2552.80px;top:1751.33px;font-size:23px;color:#6e6e6e;transform:scaleX(0.8392);transform-origin:0 0;letter-spacing:1.001px;-webkit-text-stroke-width:0px;">© DLS TECHNOLOGY</div>
<svg class="r" style="left:2785px;top:1745px;" width="40" height="40" viewBox="2785 1745 40 40"><polyline points="2795.6,1759.6 2804,1768 2812.4,1759.6" fill="none" stroke="#6b6b6b" stroke-width="3.6"/></svg>
</div>
<script>(function(){var w=window.innerWidth||2880;if(Math.abs(w-2880)>2){var s=w/2880;document.getElementById('root').style.transform='scale('+s+')';document.documentElement.style.width=document.body.style.width=w+'px';document.documentElement.style.height=document.body.style.height=(1800*s)+'px';}})();</script>
</body></html>
